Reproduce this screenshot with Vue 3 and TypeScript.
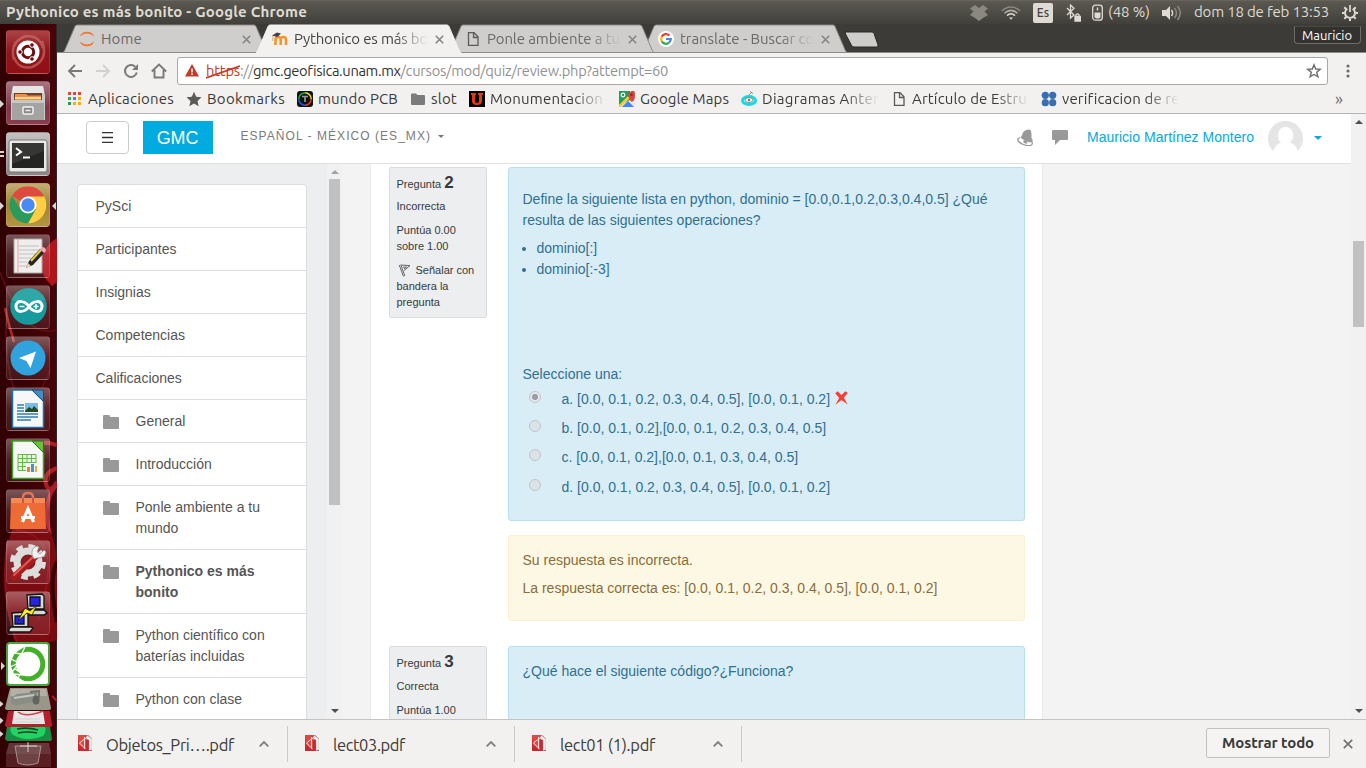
<script setup lang="ts">
import type { Directive } from 'vue'

interface Label { text: string; width: number }
interface Tab extends Label { icon: string; active?: boolean; fade?: boolean }
interface Bookmark extends Label { icon: string; fade?: boolean }
interface Entry { lines: string[]; folder?: boolean; current?: boolean }

// Adjusts tracking so that a label takes the given advance width in pixels.
const vFit: Directive<HTMLElement, number> = {
  mounted(el, binding) {
    const range = document.createRange()
    range.selectNodeContents(el)
    const natural = range.getBoundingClientRect().width
    const count = (el.textContent ?? '').length
    if (natural > 0 && count > 0) {
      el.style.letterSpacing = `${(binding.value - natural) / count}px`
    }
  },
}

const tabs: Tab[] = [
  { icon: 'jupyter', text: 'Home', width: 41 },
  { icon: 'moodle', text: 'Pythonico es más bo', width: 134, active: true, fade: true },
  { icon: 'page', text: 'Ponle ambiente a tu', width: 133, fade: true },
  { icon: 'google', text: 'translate - Buscar co', width: 134, fade: true },
]

const bookmarks: Bookmark[] = [
  { icon: 'apps', text: 'Aplicaciones', width: 86 },
  { icon: 'star', text: 'Bookmarks', width: 78 },
  { icon: 'pcb', text: 'mundo PCB', width: 80 },
  { icon: 'folder', text: 'slot', width: 26 },
  { icon: 'unam', text: 'Monumentacion', width: 113, fade: true },
  { icon: 'maps', text: 'Google Maps', width: 89 },
  { icon: 'antenna', text: 'Diagramas Anter', width: 117, fade: true },
  { icon: 'page', text: 'Artículo de Estru', width: 115, fade: true },
  { icon: 'dots', text: 'verificacion de re', width: 117, fade: true },
]

const entries: Entry[] = [
  { lines: ['PySci'] },
  { lines: ['Participantes'] },
  { lines: ['Insignias'] },
  { lines: ['Competencias'] },
  { lines: ['Calificaciones'] },
  { lines: ['General'], folder: true },
  { lines: ['Introducción'], folder: true },
  { lines: ['Ponle ambiente a tu', 'mundo'], folder: true },
  { lines: ['Pythonico es más', 'bonito'], folder: true, current: true },
  { lines: ['Python científico con', 'baterías incluidas'], folder: true },
  { lines: ['Python con clase'], folder: true },
]

const answers = [
  'a. [0.0, 0.1, 0.2, 0.3, 0.4, 0.5], [0.0, 0.1, 0.2]',
  'b. [0.0, 0.1, 0.2],[0.0, 0.1, 0.2, 0.3, 0.4, 0.5]',
  'c. [0.0, 0.1, 0.2],[0.0, 0.1, 0.3, 0.4, 0.5]',
  'd. [0.0, 0.1, 0.2, 0.3, 0.4, 0.5], [0.0, 0.1, 0.2]',
]

const downloads: Label[] = [
  { text: 'Objetos_Pri….pdf', width: 128 },
  { text: 'lect03.pdf', width: 72 },
  { text: 'lect01 (1).pdf', width: 95 },
]
</script>

<template>
  <div class="desktop">
    <header class="panel">
      <span class="panel-title" v-fit="301">Pythonico es más bonito - Google Chrome</span>
      <div class="indicators">
        <svg class="ind-dropbox" width="18" height="16" viewBox="0 0 18 16" fill="#8b887f"><path d="M5 0l4 3 4-3 5 3.500-3.500 3L18 10l-5 3-4 3-4-3-5-3 3.500-3.500L0 3.500z" /></svg>
        <svg class="ind-wifi" width="20" height="14" viewBox="0 0 20 14" fill="none" stroke-width="1.500"><path d="M.8 5Q10-3 19.200 5" stroke="#8b887f" /><path d="M3.500 7.300Q10 1.500 16.500 7.300" stroke="#b5b1a8" /><path d="M6 9.600Q10 6 14 9.600" stroke="#dfdbd2" /><path d="M8 11.500h4l-2 2.300z" fill="#dfdbd2" /></svg>
        <span class="ind-lang">Es</span>
        <svg class="ind-bt" width="15" height="18" viewBox="0 0 15 18" fill="none" stroke="#dfdbd2" stroke-width="1.300"><path d="M1 4l7 7-3.500 3V1L8 4.300 1 11" /><path d="M10 12.500v-1.800q1.500-1.600 3 0v1.800" /><path d="M9 12.500h5.500V17H9z" fill="#dfdbd2" /></svg>
        <svg class="ind-bat" width="11" height="17" viewBox="0 0 11 17"><rect x=".7" y="1.200" width="9.600" height="15" rx="2.800" fill="none" stroke="#dfdbd2" stroke-width="1.300" /><path d="M2.500 8.500h6v4q0 2-3 2t-3-2zM4.800 3.500h1.400v3H4.800z" fill="#dfdbd2" /></svg>
        <span class="ind-text ind-pct" v-fit="42">(48 %)</span>
        <svg class="ind-sound" width="20" height="16" viewBox="0 0 20 16"><path d="M0 5h4l4-4v14l-4-4H0z" fill="#dfdbd2" /><path d="M9.500 5q2.200 3 0 6" fill="none" stroke="#dfdbd2" stroke-width="1.500" /><path d="M12.500 3q4 5 0 10M15.500 1q5.500 7 0 14" fill="none" stroke="#8b887f" stroke-width="1.500" /></svg>
        <span class="ind-text ind-date" v-fit="135">dom 18 de feb 13:53</span>
        <svg class="ind-gear" width="16" height="16" viewBox="0 0 16 16" fill="none" stroke="#dfdbd2"><path d="M5.300 3.700A5 5 0 1 0 10.700 3.700" stroke-width="1.900" /><path d="M8 0v7" stroke-width="1.700" /><path d="M0 8h2.500M13.500 8H16M8 13.500V16M2.300 2.300l2 2M13.700 2.300l-2 2M2.300 13.700l2-2M13.700 13.700l-2-2" stroke-width="2" /></svg>
      </div>
    </header>

    <div class="workspace">
      <nav class="launcher">
        <svg class="swirls" width="57" height="744" viewBox="0 24 57 744" fill="none" aria-hidden="true">
          <path d="M57 238Q44 246 40 262Q41 276 52 286L57 282z" fill="#b2141c" />
          <path d="M0 272Q24 340 57 330M8 300Q2 350 14 390T50 370" stroke="#560c11" stroke-width="2" />
          <path d="M5 308q4 18 9 34" stroke="#b3232b" stroke-width="2.500" />
          <path d="M57 445Q42 440 34 446M57 468q-14 5-11 16t11-2M57 485Q42 498 50 535" stroke="#a91d27" stroke-width="4" />
          <path d="M14 524Q60 505 57 580V640Q34 648 14 640Q-4 570 14 524z" fill="#7b0a11" />
          <path d="M16 530Q66 535 38 620M8 540Q-2 600 22 655" stroke="#8c1219" stroke-width="2" />
          <path d="M57 562Q48 580 57 622" stroke="#320003" stroke-width="4" />
          <path d="M52 696l5 5" stroke="#a91d27" stroke-width="2" />
        </svg>
        <div class="tile tile-dash">
          <svg viewBox="0 0 44 44"><path d="M8 30Q3 12 20 6Q34 6 37 18M36 11Q43 30 26 37Q12 40 8 27" fill="none" stroke="#d47b7d" stroke-width="2.500" opacity=".55" /><circle cx="22" cy="22" r="11.500" fill="#fff" /><circle cx="22" cy="22" r="5.700" fill="none" stroke="#6d0d10" stroke-width="3" /><g fill="#6d0d10" stroke="#fff" stroke-width="1"><circle cx="14" cy="22" r="2.300" /><circle cx="26" cy="15" r="2.300" /><circle cx="26" cy="29" r="2.300" /></g></svg>
        </div>
        <div class="tile tile-files">
          <i class="pip-left" />
          <svg viewBox="0 0 44 44"><path d="M7 5h30l2 9v25H5V14z" fill="#c9c9c7" /><path d="M7 5h30l1 7H6z" fill="#e6e6e4" /><path d="M8 12h28v8H8z" fill="#6a4330" /><path d="M9 13h11l2 1.500h13V20H9z" fill="#f58c3c" /><path d="M9 16h26v2H9z" fill="#ffd9a0" /><path d="M6 19h32v20H6z" fill="#a3a3a1" /><path d="M6 19h32v3H6z" fill="#c7c7c5" /><rect x="17" y="26" width="10" height="7" rx="1" fill="#888" stroke="#f2f2f2" stroke-width="1.500" /><path d="M19.500 29.500h5" stroke="#eee" stroke-width="1.500" /></svg>
        </div>
        <div class="tile tile-term">
          <i class="pip-left two" />
          <svg viewBox="0 0 44 44"><rect x="3" y="8" width="38" height="32" rx="2" fill="#e8e8e6" stroke="#777" /><rect x="6" y="11" width="32" height="25" fill="#242523" /><path d="M6 11h32v8L6 32z" fill="#424340" opacity=".6" /><path d="M10 16l5 4-5 3.500" fill="none" stroke="#fff" stroke-width="2" /><path d="M17 25.500h7" stroke="#fff" stroke-width="2" /></svg>
        </div>
        <div class="tile tile-chrome">
          <i class="pip-left" /><i class="pip-right" />
          <svg viewBox="0 0 44 44"><path d="M22 22L6 13A18.300 18.300 0 0 1 38 13z" fill="#dc4b3e" /><path d="M22 22V13.500h16.200A18.300 18.300 0 0 1 22 40.300l8-14z" fill="#ffce44" /><path d="M22 22l7.500 4.500L22 40.300A18.300 18.300 0 0 1 6 13l8.500 13.500z" fill="#2a9b5c" /><circle cx="22" cy="22" r="8.500" fill="#fff" /><circle cx="22" cy="22" r="6.700" fill="#4a8af4" /></svg>
        </div>
        <div class="tile">
          <svg viewBox="0 0 44 44"><path d="M8 5h28v34H8z" fill="#efeeec" stroke="#aaa" /><path d="M13 12h20M13 16h20M13 20h17M13 24h12M13 28h8M13 32h8" stroke="#c0c1c5" /><path d="M12 5v34" stroke="#e8a0a0" /><path d="M20 34l3-7 11-12 4 4-11 12z" fill="#272727" /><path d="M25 27L35 16" stroke="#efcf31" stroke-width="2" /><path d="M34 15l2-2q4 0 4 4l-2 2z" fill="#f1a7c0" /><path d="M20 34l2-5 3 3z" fill="#f0d7a0" /></svg>
        </div>
        <div class="tile">
          <svg viewBox="0 0 44 44"><circle cx="22.500" cy="21.500" r="18.300" fill="#169a9c" /><path d="M5.500 14.500A18.300 18.300 0 0 1 39.500 14.500Q22 23 5.500 14.500" fill="#49b9b8" opacity=".45" /><path d="M23 21.500C19 15.500 10 14.500 10 21.500S19 27.500 23 21.500S36 14.500 36 21.500S27 27.500 23 21.500z" fill="none" stroke="#fff" stroke-width="3" /><path d="M13.500 21.500h5M27.500 21.500h5M30 19v5" stroke="#fff" stroke-width="1.500" /></svg>
        </div>
        <div class="tile">
          <svg viewBox="0 0 44 44"><circle cx="22" cy="22" r="17.500" fill="#30a3df" /><path d="M13 22l17-6.500-5.500 16.500-4-7z" fill="#fff" /></svg>
        </div>
        <div class="tile">
          <svg viewBox="0 0 44 44"><path d="M6.500 3h20L37.500 14v26.500h-31z" fill="#f7f7f7" stroke="#1673a8" stroke-width="1.500" /><path d="M26 3h11.500v11.500z" fill="#3f8fc5" stroke="#144f78" /><path d="M11 18h7M11 21h7M11 24h7M11 27h21M11 30h21M11 33h14" stroke="#2e83b8" stroke-width="1.500" /><path d="M19 16h13v9H19z" fill="#76bce8" /><path d="M19 24l4-4 3 2 2-3 4 4v2H19z" fill="#254a20" /></svg>
        </div>
        <div class="tile">
          <svg viewBox="0 0 44 44"><path d="M6.500 3h20L37.500 14v26.500h-31z" fill="#f7f7f7" stroke="#37a51f" stroke-width="1.500" /><path d="M26 3h11.500v11.500z" fill="#67c337" stroke="#2a721a" /><path d="M12 16.500h18v16H12zM12 20.500h18M12 24.500h18M12 28.500h18M16.500 16v16M21 16v16M25.500 16v16" fill="#e8f7df" stroke="#5ebc3f" /><path d="M20 25h12v9H20z" fill="#f5f5f5" /><path d="M21 29h3v5h-3z" fill="#e7823c" /><path d="M25 26h3v8h-3z" fill="#4e8fc8" /><path d="M29 28h2v6h-2z" fill="#e2b243" /></svg>
        </div>
        <div class="tile">
          <svg viewBox="0 0 44 44"><path d="M17 14V8q0-4 5-4t5 4v6" fill="none" stroke="#e0745a" stroke-width="2.500" /><path d="M5 9h34l1 31H4z" fill="#ef6b36" /><path d="M5 9h34v5H5z" fill="#f58a58" /><path d="M17 14V9M27 14V9" stroke="#c9583a" stroke-width="2" /><path d="M16.500 33l5.500-13 5.500 13M15 28.500h14" fill="none" stroke="#fff" stroke-width="3.200" /></svg>
        </div>
        <div class="tile">
          <svg viewBox="0 0 44 44"><circle cx="22" cy="22" r="15.500" fill="none" stroke="#dededc" stroke-width="5" stroke-dasharray="6.500 5.670" /><circle cx="22" cy="22" r="11" fill="#861c22" stroke="#dddddb" stroke-width="7" /><path d="M8 37L29 17" stroke="#a91b1d" stroke-width="6.500" stroke-linecap="round" /><path d="M8 35L28 16" stroke="#e35751" stroke-width="2" stroke-linecap="round" /><path d="M26 15q-1-7 5-9l2 1-2 5 3 2 4-4 2 2q-1 6-9 6l-3 1z" fill="#f1f1ef" stroke="#8a8a88" stroke-width=".7" /></svg>
        </div>
        <div class="tile">
          <svg viewBox="0 0 44 44"><g stroke="#111" stroke-width="1.300"><path d="M21 4l15-1 2 2v13H22z" fill="#d9d9d4" /><path d="M24 6h10v9H24z" fill="#2424e8" /><path d="M18 19h20l3 3-3 2H19z" fill="#d9d9d4" /><path d="M6 22l14-1 2 2v13H7z" fill="#d9d9d4" /><path d="M9 25h9v8H9z" fill="#2424e8" /><path d="M5 36h20l2 1-3 4H3v-3z" fill="#d9d9d4" /><path d="M12 30l7-13 5 3 7-6-5 10-5-2z" fill="#ffee22" stroke-width=".8" /></g></svg>
        </div>
        <div class="tile tile-anaconda">
          <i class="pip-left" />
          <svg viewBox="0 0 44 44"><circle cx="22" cy="22" r="14.800" fill="none" stroke="#43b02a" stroke-width="5" /><path d="M20 3L8 11 3 22l5 11 10 7M19 5l-5 10M8 11l8 1M5 17l8 4-6 8M13 21l-9 4M9 27l6 4-3 5M7 32l11 1" fill="none" stroke="#fff" stroke-width="1.300" /></svg>
        </div>
        <div class="stack">
          <svg width="57" height="82" viewBox="0 0 57 82">
            <path d="M10 2h37l4 20q0 2-2 2H7q-2 0-2-2z" fill="#99968a" /><path d="M11 3h35l1 7H10z" fill="#b3b0a6" />
            <path d="M11 12l6-4 20-2v9l-20 4q-6 0-6-3z" fill="#8a8c86" /><ellipse cx="36" cy="14" rx="3.500" ry="4.500" fill="#62645e" /><path d="M14 11l20-3v2l-20 3z" fill="#c4c5c0" /><path d="M30 6l9-1v7" fill="none" stroke="#6f716b" stroke-width="1.800" />
            <path d="M8 25h42l2 14q0 2-2 2H6l-1-2z" fill="#b2202d" /><path d="M14 25h29l2 13H12z" fill="#e8e6e6" /><path d="M18 26q8 6 25-1" fill="none" stroke="#d5424a" stroke-width="1.500" /><path d="M15 33h25M15 36h25" stroke="#d5d1d1" />
            <path d="M7 41h43l2 12q0 2-2 2H7l-2-2z" fill="#188d45" /><path d="M11 41h34q2 4-2 9-15 7-30-1-4-4-2-8z" fill="#20d363" /><path d="M17 43q11-2 21 1M18 47q10-2 19 0" fill="none" stroke="#144624" stroke-width="1.700" />
            <path d="M9 57h40l2 11H6z" fill="#8c6a6a" opacity=".5" /><path d="M6 68h45v13H6z" fill="#6b3436" opacity=".6" /><path d="M15 60h26l-3 17q-11 4-20 0z" fill="#8a6f6f" fill-opacity=".45" stroke="#b7a6a5" stroke-width=".8" /><path d="M28 56v10M20 60h17" stroke="#eee" stroke-width=".8" />
            <g fill="#d9d5d2"><path d="M0 15l3.500 3L0 21zM0 31.500l3.500 3L0 38zM0 45l3.500 3L0 51z" /></g>
          </svg>
        </div>
      </nav>

      <section class="browser">
        <div class="tabstrip">
          <div class="tabs">
            <div v-for="tab in tabs" :key="tab.text" class="tab" :class="{ active: tab.active }">
              <svg class="tab-shape" width="207" height="29" viewBox="0 0 207 29"><path class="tab-fill" d="M0 28.500L1.500 27 12 2.500Q12.700 1 14 1H191Q192.300 1 193 2.500L203.500 27 205 28.500z" /></svg>
              <span class="favicon">
                <svg v-if="tab.icon === 'jupyter'" width="16" height="16" viewBox="0 0 16 16" fill="#f37726"><path d="M.8 5.500Q2.500.7 8 .7t7.200 4.800Q8-.3.8 5.500zM.8 10.500Q2.500 15.300 8 15.300t7.200-4.800Q8 16.300.8 10.500z" /></svg>
                <svg v-else-if="tab.icon === 'moodle'" width="16" height="16" viewBox="0 0 16 16"><path d="M3.500 14V8.500Q3.500 6 6 6t2.700 2.500V14M8.700 14V8.500Q8.700 6 11.300 6T14 8.500V14" fill="none" stroke="#f7931e" stroke-width="2.500" /><path d="M0 4.500l5-3 4 1-3.500 3.500z" fill="#444" /><path d="M.8 5v5" stroke="#e6ab77" /></svg>
                <svg v-else-if="tab.icon === 'page'" width="16" height="16" viewBox="0 0 16 16" fill="none" stroke="#5a5a5a" stroke-width="1.300"><path d="M3.500 1.700h5.500l4 4v8.600H3.500zM8.500 2v4.500H13" /></svg>
                <svg v-else width="16" height="16" viewBox="0 0 16 16"><circle cx="8" cy="8" r="8" fill="#fff" /><g fill="none" stroke-width="2.200"><path d="M11.500 4.500A4.800 4.800 0 0 0 3.700 5.800" stroke="#ea4335" /><path d="M3.700 5.800A4.800 4.800 0 0 0 3.700 10.200" stroke="#fbbc05" /><path d="M3.700 10.200A4.800 4.800 0 0 0 11 11.700" stroke="#34a853" /><path d="M11 11.700Q12.800 10.200 12.800 8H8" stroke="#4285f4" /></g></svg>
              </span>
              <span class="tab-label" :class="{ fade: tab.fade }"><span v-fit="tab.width">{{ tab.text }}</span></span>
              <svg class="tab-close" width="9" height="9" viewBox="0 0 9 9" stroke="#868584" stroke-width="1.600"><path d="M.8.8l7.400 7.400M8.200.8L.8 8.200" /></svg>
            </div>
          </div>
          <svg class="new-tab" width="34" height="17" viewBox="0 0 34 17"><path d="M1 1h26q1.500 0 2 1.500l4 11.500q.5 2-1.500 2H9q-2 0-2.700-2L.5 3Q0 1 1 1z" fill="#cfcdcb" stroke="#2b2a27" /></svg>
          <span class="profile"><span v-fit="50">Mauricio</span></span>
        </div>

        <div class="toolbar">
          <svg width="16" height="16" viewBox="0 0 16 16" fill="none" stroke="#7a7978" stroke-width="1.900"><path d="M15 8H2.500M8 2L2 8l6 6" /></svg>
          <svg width="16" height="16" viewBox="0 0 16 16" fill="none" stroke="#d3d1cf" stroke-width="1.900"><path d="M1 8h12.500M8 2l6 6-6 6" /></svg>
          <svg width="16" height="16" viewBox="0 0 16 16" fill="none" stroke="#7a7978" stroke-width="2"><path d="M13.800 9.500A6 6 0 1 1 12.200 3.700" /><path d="M15 1v6H9z" fill="#7a7978" stroke="none" /></svg>
          <svg width="16" height="16" viewBox="0 0 16 16" fill="none" stroke="#7a7978" stroke-width="1.900"><path d="M.8 8.500L8 1.500l7.200 7M3.500 7v7.500h9V7" /></svg>
          <div class="omnibox">
            <svg width="14" height="13" viewBox="0 0 14 13"><path d="M7 0l7 12.500H0z" fill="#c53929" /><path d="M7 4.500v4M7 9.500v1.500" stroke="#fff" stroke-width="1.500" /></svg>
            <div class="url">
              <span class="scheme"><span v-fit="34">https</span><svg class="strike" width="35" height="14" viewBox="0 0 35 14"><path d="M0 13L34 1" stroke="#c53929" stroke-width="1.700" /></svg></span>
              <span v-fit="13">://</span>
              <span class="domain" v-fit="147">gmc.geofisica.unam.mx</span>
              <span v-fit="267.500">/cursos/mod/quiz/review.php?attempt=60</span>
            </div>
            <svg class="fav" width="16" height="16" viewBox="0 0 16 16" fill="none" stroke="#6d6c6b" stroke-width="1.400"><path d="M8 1.800l1.700 4.200 4.500.3-3.500 3 1.200 4.500L8 11.500l-3.900 2.300 1.200-4.500-3.500-3 4.500-.3z" /></svg>
          </div>
          <svg class="menu" width="4" height="14" viewBox="0 0 4 14" fill="#6d6c6b"><circle cx="2" cy="2" r="1.600" /><circle cx="2" cy="7" r="1.600" /><circle cx="2" cy="12" r="1.600" /></svg>
        </div>

        <div class="bookmarks">
          <div v-for="mark in bookmarks" :key="mark.text" class="bookmark">
            <svg v-if="mark.icon === 'apps'" width="16" height="16" viewBox="0 0 16 16"><path d="M1 1h3v3H1zM6 1h3v3H6zM11 1h3v3h-3z" fill="#ea4335" /><path d="M1 6h3v3H1z" fill="#34a853" /><path d="M6 6h3v3H6z" fill="#4285f4" /><path d="M11 6h3v3h-3zM6 11h3v3H6zM11 11h3v3h-3z" fill="#fbad05" /><path d="M1 11h3v3H1z" fill="#279b55" /></svg>
            <svg v-else-if="mark.icon === 'star'" width="16" height="16" viewBox="0 0 16 16" fill="#5a5a5a"><path d="M8 .8l2.200 4.900 5.300.6-4 3.600 1.100 5.300L8 12.500l-4.600 2.700 1.100-5.300-4-3.600 5.300-.6z" /></svg>
            <svg v-else-if="mark.icon === 'pcb'" width="16" height="16" viewBox="0 0 16 16"><rect width="16" height="16" rx="3" fill="#111" /><g fill="none" stroke-width="1.500"><path d="M1.800 8A6.200 6.200 0 0 1 8 1.800" stroke="#19aa38" /><path d="M8 1.800A6.200 6.200 0 0 1 14.200 8" stroke="#eed42f" /><path d="M14.200 8A6.200 6.200 0 0 1 8 14.200" stroke="#e43731" /><path d="M8 14.200A6.200 6.200 0 0 1 1.800 8" stroke="#2557dc" /></g><path d="M5 5.500h6M8 5.500V11" stroke="#999" stroke-width="1.700" /></svg>
            <svg v-else-if="mark.icon === 'folder'" width="16" height="16" viewBox="0 0 16 16" fill="#7b7b7b"><path d="M1 3.500q0-1 1-1h4l1.500 1.500H14q1 0 1 1V13q0 1-1 1H2q-1 0-1-1z" /></svg>
            <svg v-else-if="mark.icon === 'unam'" width="16" height="16" viewBox="0 0 16 16"><path d="M0 0h16v16H0z" fill="#000" /><path d="M2 2h5v2H6v6q0 2 2 2t2-2V4H9V2h5v2h-1v6q0 4-5 4t-5-4V4H2z" fill="#e33a0c" /></svg>
            <svg v-else-if="mark.icon === 'maps'" width="16" height="16" viewBox="0 0 16 16"><path d="M0 0h16v16H0z" fill="#e8e8e8" /><path d="M0 0h11v9L5 12 0 14z" fill="#229f59" /><path d="M3 16l6-6 6 6z" fill="#4285f4" /><path d="M0 14l9-9 2 2-9 9H0z" fill="#f5ca45" /><path d="M12.500 11Q9 6 9 4t3.500-4T16 4t-3.500 7z" fill="#d9473a" /><circle cx="12.500" cy="3.700" r="1.300" fill="#812d2a" /><circle cx="4" cy="4" r="1.800" fill="none" stroke="#fff" stroke-width="1.200" /></svg>
            <svg v-else-if="mark.icon === 'antenna'" width="16" height="16" viewBox="0 0 16 16"><ellipse cx="8" cy="9.500" rx="6.500" ry="4" fill="none" stroke="#12dbe3" stroke-width="3" /><ellipse cx="8" cy="9" rx="4" ry="2.500" fill="#f6f6f6" stroke="#666" stroke-width=".7" /><circle cx="8" cy="9" r="1.200" fill="#777" /><path d="M8 4l3-3M9 .5l3 2" stroke="#777" stroke-width=".8" /></svg>
            <svg v-else-if="mark.icon === 'page'" width="16" height="16" viewBox="0 0 16 16" fill="none" stroke="#5a5a5a" stroke-width="1.300"><path d="M3.500 1.700h5.500l4 4v8.600H3.500zM8.500 2v4.500H13" /></svg>
            <svg v-else width="16" height="16" viewBox="0 0 16 16" fill="#396eb2"><circle cx="4.300" cy="4.300" r="3.600" /><circle cx="11.700" cy="4.300" r="3.600" /><circle cx="4.300" cy="11.700" r="3.600" /><circle cx="11.700" cy="11.700" r="3.600" /></svg>
            <span class="mark-label" :class="{ fade: mark.fade }"><span v-fit="mark.width">{{ mark.text }}</span></span>
          </div>
          <span class="overflow">»</span>
        </div>

        <div class="page">
          <div class="page-main">
            <div class="navbar">
              <button class="burger" type="button" aria-label="Menú"><svg width="11" height="11" viewBox="0 0 11 11" stroke="#333" stroke-width="1.300"><path d="M0 .7h11M0 5.500h11M0 10.300h11" /></svg></button>
              <span class="brand">GMC</span>
              <span class="language" v-fit="190.500">ESPAÑOL - MÉXICO (ES_MX)</span>
              <i class="caret lang-caret" />
              <div class="user">
                <svg class="bell" width="16" height="17" viewBox="0 0 16 17" fill="#999"><path d="M6 3.500Q8 .5 12.500.5L14 2q.8 3 .5 7 1.500 1.500 1.200 4.500-4.500.2-8-2T3.500 8.500Q5 7 6 3.500z" /><path d="M3 8.700Q.5 9.500.8 11q.7 2.500 5.500 4.500t8.200.5q1-.8.900-2.500" fill="none" stroke="#999" stroke-width="1.300" /><ellipse cx="8.300" cy="13" rx="2.200" ry="1.500" transform="rotate(24 8.300 13)" /></svg>
                <svg class="comment" width="16" height="15" viewBox="0 0 16 15" fill="#999"><path d="M1.200 0h13.600Q16 0 16 1.200v7.600q0 1.200-1.200 1.200H8l-5 5V10H1.200Q0 10 0 8.800V1.200Q0 0 1.200 0z" /></svg>
                <span class="user-name" v-fit="167">Mauricio Martínez Montero</span>
                <svg class="avatar" width="35" height="35" viewBox="0 0 35 35"><circle cx="17.500" cy="17.500" r="17.500" fill="#e5e5e5" /><ellipse cx="17.500" cy="14.500" rx="7.700" ry="8.800" fill="#fff" /><path d="M5 31Q7 23 13 21.500h9Q28 23 30 31l-3 4H8z" fill="#fff" /></svg>
                <i class="caret user-caret" />
              </div>
            </div>
            <div class="columns">
              <aside class="drawer">
                <ul class="entries">
                  <li v-for="entry in entries" :key="entry.lines[0]" :class="{ nested: entry.folder, current: entry.current }">
                    <svg v-if="entry.folder" width="16" height="14" viewBox="0 0 16 14" fill="#999"><path d="M0 1Q0 0 1 0h5Q7 0 7 1v1h8q1 0 1 1v10q0 1-1 1H1q-1 0-1-1z" /></svg>
                    <span><template v-for="(line, n) in entry.lines" :key="line"><br v-if="n" />{{ line }}</template></span>
                  </li>
                </ul>
              </aside>
              <div class="drawer-scroll"><i class="arrow-up muted" /><i class="drawer-thumb" /><i class="arrow-down" /></div>
              <main class="content">
                <article class="question first">
                  <div class="info">
                    <h3>Pregunta <b>2</b></h3>
                    <p>Incorrecta</p>
                    <p>Puntúa 0.00<br />sobre 1.00</p>
                    <p><svg class="flag" width="13" height="13" viewBox="0 0 13 13" fill="none" stroke="#666" stroke-width="1"><path d="M1.200 1l4.300 11.500M2.800.8l4 11.200M2.800 1l9.200.6-6.300 5.200M4.800 3.200l3.700-.2-2.500 2" /></svg>Señalar con<br />bandera la<br />pregunta</p>
                  </div>
                  <div class="body">
                    <div class="formulation">
                      <p>Define la siguiente lista en python, dominio = [0.0,0.1,0.2,0.3,0.4,0.5] ¿Qué<br />resulta de las siguientes operaciones?</p>
                      <ul class="ops"><li>dominio[:]</li><li>dominio[:-3]</li></ul>
                      <p class="prompt">Seleccione una:</p>
                      <div v-for="(answer, n) in answers" :key="answer" class="answer">
                        <i class="radio" :class="{ checked: n === 0 }" />
                        <span>{{ answer }}</span>
                        <svg v-if="n === 0" class="cross" width="13" height="14" viewBox="0 0 13 14"><path d="M.2 2.200L2.700.2 6.500 4.200 10.200.2l2.600 1.900-4 4.700L12.700 13.500 6.500 9 .3 13.700 4.200 7z" fill="#ff3c32" /></svg>
                      </div>
                    </div>
                    <div class="feedback"><p>Su respuesta es incorrecta.</p><p>La respuesta correcta es: [0.0, 0.1, 0.2, 0.3, 0.4, 0.5], [0.0, 0.1, 0.2]</p></div>
                  </div>
                </article>
                <article class="question">
                  <div class="info"><h3>Pregunta <b>3</b></h3><p>Correcta</p><p>Puntúa 1.00</p></div>
                  <div class="body"><div class="formulation next"><p>¿Qué hace el siguiente código?¿Funciona?</p></div></div>
                </article>
              </main>
            </div>
          </div>
          <div class="page-scroll"><i class="arrow-up" /><i class="page-thumb" /><i class="arrow-down" /></div>
        </div>

        <footer class="downloads">
          <div v-for="file in downloads" :key="file.text" class="download">
            <svg width="14" height="16" viewBox="0 0 14 16"><path d="M0 0h10l4 4v12H0z" fill="#c62930" /><path d="M9 0l5 4v11l-3 .5V5L8 4z" fill="#ececec" stroke="#999" stroke-width=".4" /><path d="M0 0h8v15L1 10z" fill="#d94c46" /><path d="M8.500 2.500L1.500 8l5.500 5.500M6.500 2v12" fill="none" stroke="#f5dcdc" stroke-width="1" /></svg>
            <span class="file-name"><span v-fit="file.width">{{ file.text }}</span></span>
            <svg class="chevron" width="10" height="6" viewBox="0 0 10 6" fill="none" stroke="#807f7e" stroke-width="1.800"><path d="M.7 5.300L5 1l4.300 4.300" /></svg>
          </div>
          <button class="show-all" type="button"><span v-fit="92">Mostrar todo</span></button>
          <svg class="bar-close" width="10" height="10" viewBox="0 0 10 10" stroke="#737271" stroke-width="1.700"><path d="M.8.8l8.400 8.400M9.200.8L.8 9.200" /></svg>
        </footer>
      </section>
    </div>
  </div>
</template>

<style>
body { margin: 0; overflow: hidden; }
</style>

<style scoped>
* { box-sizing: border-box; }
svg { display: block; flex: none; }
p, h3, ul { margin: 0; padding: 0; }
.desktop { width: 1366px; height: 768px; overflow: hidden; display: flex; flex-direction: column; font-family: Ubuntu, "Noto Sans", sans-serif; font-size: 15px; color: #3c3b37; white-space: nowrap; }
.panel { height: 24px; flex: none; display: flex; align-items: center; padding: 0 8px 0 6px; background: linear-gradient(#5b5950, #504f48 40%, #403f3a); border-top: 1px solid #66645c; color: #dfdbd2; }
.panel-title { font-weight: 700; font-size: 15px; line-height: 20px; margin-top: -2px; }
.indicators { margin-left: auto; display: flex; align-items: center; }
.ind-wifi { margin-left: 13px; }
.ind-lang { width: 20px; height: 20px; margin-left: 12px; border-radius: 2px; background: #dfdbd2; color: #45443f; font-size: 12px; line-height: 20px; text-align: center; font-weight: 500; }
.ind-bt { margin-left: 13px; }
.ind-bat { margin-left: 11px; }
.ind-text { font-size: 15px; line-height: 20px; margin-top: -2px; }
.ind-pct { margin-left: 5px; width: 42px; }
.ind-sound { margin-left: 12px; }
.ind-date { margin-left: 12px; width: 135px; }
.ind-gear { margin-left: 13px; }
.workspace { display: flex; height: 744px; }

.launcher { position: relative; width: 57px; padding: 6px 0 0 6px; display: flex; flex-direction: column; gap: 7px; background: linear-gradient(90deg, #300003, #480307); border-right: 1px solid #29292b; }
.swirls { position: absolute; left: 0; top: 0; }
.tile { position: relative; width: 44px; height: 44px; flex: none; border-radius: 4px; border: 1px solid rgba(255, 255, 255, .12); background: linear-gradient(rgba(255, 255, 255, .34), rgba(255, 255, 255, .12) 50%, rgba(255, 255, 255, .08)); }
.tile svg { width: 44px; height: 44px; margin: -1px; }
.tile-dash { background: linear-gradient(#ac4245, #8e1519 50%, #8f1015); }
.tile-files { background: linear-gradient(#a57581, #7e3647 60%, #8c3c4f); }
.tile-term { background: linear-gradient(#c5c0c1, #8d8586); }
.tile-chrome { background: linear-gradient(#c2ad73, #a28431 50%, #b29642); }
.tile-anaconda { background: #fff; border: 2px solid #43a83a; }
.tile-anaconda svg { margin: -2px; }
.pip-left, .pip-right { position: absolute; top: 18px; border: 4px solid transparent; }
.pip-left { left: -7px; border-left-color: #d9d5d2; border-right-width: 0; }
.pip-left.two { border: 0; width: 4px; height: 6px; border-top: 2px solid #d9d5d2; border-bottom: 2px solid #d9d5d2; }
.pip-right { right: -7px; border-right-color: #d9d5d2; border-left-width: 0; }
.stack { position: relative; margin: -7px 0 0 -6px; }

.browser { width: 1309px; display: flex; flex-direction: column; background: #f2f1f0; }
.tabstrip { height: 29px; flex: none; display: flex; background: #3c3b37; padding-left: 6px; border-bottom: 1px solid #8d8b88; }
.tabs { display: flex; isolation: isolate; }
.tab { position: relative; width: 193px; height: 29px; display: flex; align-items: center; padding: 1px 0 0 16px; color: #6a6968; z-index: 1; }
.tab:nth-child(1) { z-index: 4; }
.tab:nth-child(3) { z-index: 3; }
.tab.active { z-index: 5; color: #454442; }
.tab-shape { position: absolute; left: 0; top: 0; z-index: -1; }
.tab-fill { fill: #d0cecd; stroke: #8d8b88; stroke-width: 1; }
.active .tab-fill { fill: #f2f1f0; stroke: #f2f1f0; }
.favicon { width: 16px; }
.tab-label { margin-left: 6px; width: 134px; overflow: hidden; font-size: 15px; line-height: 22px; }
.fade { mask-image: linear-gradient(90deg, #000 calc(100% - 34px), transparent); }
.tab-close { margin-left: 6.500px; }
.new-tab { margin: 7px 0 0 10px; }
.profile { margin: 2px 5px 0 auto; width: 67px; height: 18px; padding-left: 7px; border: 1px solid #6e6c66; border-top-color: #4a4944; border-radius: 0 0 4px 4px; background: #33322f; color: #fff; font-size: 13px; line-height: 17px; }

.toolbar { height: 35px; flex: none; display: flex; align-items: center; padding: 1px 16px 0 10px; gap: 12px; }
.omnibox { width: 1152px; height: 28px; margin: -1px 0 0 -2px; display: flex; align-items: center; padding: 0 5px 0 7px; border: 1px solid #aaa8a6; border-radius: 3px; background: #fff; }
.url { margin-left: 7px; display: flex; color: #929191; font-size: 14.700px; }
.scheme { position: relative; color: #c53929; }
.strike { position: absolute; left: 0; top: 3px; }
.domain { color: #333; }
.fav { margin-left: auto; }
.menu { margin-left: 6px; }

.bookmarks { height: 26px; flex: none; display: flex; align-items: center; gap: 12px; padding: 0 23px 4px 10px; border-bottom: 1px solid #b6b4b4; color: #3b3a38; }
.bookmark { display: flex; align-items: center; }
.mark-label { margin-left: 5px; max-width: 117px; overflow: hidden; font-size: 15px; line-height: 22px; }
.mark-label.fade { width: 117px; }
.overflow { margin-left: auto; font-size: 17px; line-height: 20px; color: #6f6e6d; }

.page { height: 605px; flex: none; display: flex; overflow: hidden; font-family: "Liberation Sans", Arial, sans-serif; font-size: 14px; line-height: 21px; }
.page-main { width: 1294px; display: flex; flex-direction: column; background: #f3f3f3; }
.navbar { height: 50px; flex: none; display: flex; align-items: center; padding: 0 29px 2px 29px; background: #fff; border-bottom: 1px solid #dfe0e2; }
.burger { width: 43px; height: 33px; padding: 0; display: grid; place-items: center; border: 1px solid #ccc; border-radius: 4px; background: #fff; }
.brand { width: 70px; height: 33px; margin-left: 14px; padding-right: 1px; background: #00acdf; color: #fff; font-size: 17.900px; line-height: 34px; text-align: center; }
.language { margin: -3px 0 0 27.500px; width: 190.500px; font-size: 12px; color: #7a7a7a; }
.caret { border: 3.500px solid transparent; border-bottom: 0; }
.lang-caret { margin: -2px 0 0 7px; border-top-color: #777; }
.user { margin-left: auto; display: flex; align-items: center; color: #00acdf; }
.comment { margin: -1px 0 0 19px; }
.user-name { margin-left: 19px; width: 167px; }
.avatar { margin-left: 14px; margin-top: 2px; }
.user-caret { margin-left: 11px; margin-top: 1px; border-width: 4px 4px 0; border-top-color: #00acdf; }
.columns { height: 555px; display: flex; overflow: hidden; }
.drawer { width: 270px; padding: 20px 20px 0; background: #eceef0; color: #55595c; }
.entries { list-style: none; border: 1px solid #ddd; border-radius: 3px; background: #fff; color: #555; }
.entries li { display: flex; align-items: flex-start; padding: 11px 0 10px 17.500px; border-bottom: 1px solid #ddd; }
.entries li.nested { padding-left: 25px; }
.entries li.nested span { margin-left: 16.500px; }
.entries li svg { margin-top: 4px; }
.entries li.current { font-weight: 700; }
.drawer-scroll { width: 15px; display: flex; flex-direction: column; align-items: center; padding: 6px 0; background: #f1f1f1; }
.drawer-thumb { width: 11px; height: 326px; margin-top: 5px; background: #c1c1c1; }
.arrow-up, .arrow-down { border: 4px solid transparent; }
.arrow-up { border-top: 0; border-bottom-color: #505050; }
.arrow-up.muted { border-bottom-color: #a3a3a3; }
.arrow-down { margin-top: auto; border-bottom: 0; border-top-color: #505050; }
.content { width: 673px; margin-left: 28px; padding: 0 17px 0 18px; border: 1px solid #ebebeb; border-width: 0 1px; background: #fff; }
.question { display: flex; align-items: flex-start; gap: 21px; margin-top: 25.400px; }
.question.first { margin-top: 3px; }
.info { width: 98px; flex: none; padding: 5px 0 6.800px 6.500px; border: 1px solid #d9dbdd; border-radius: 2px; background: #eceeef; color: #373a3c; font-size: 11px; line-height: 16px; }
.info h3 { font-size: 11px; font-weight: 400; height: 20px; line-height: 20px; }
.info b { font-size: 17px; }
.info p { margin-top: 8px; }
.info h3 + p { margin-top: 5.200px; }
.flag { display: inline-block; vertical-align: -3px; margin: 0 5px 0 1px; }
.body { width: 517px; flex: none; }
.formulation { height: 354px; padding: 21px 13.500px 0; border: 1px solid #b8dff0; border-radius: 3px; background: #d9edf7; color: #31708f; }
.formulation.next { padding-top: 14px; }
.ops { list-style: disc; margin-top: 7px; padding-left: 14px; }
.prompt { margin: 84px 0 4px; }
.answer { display: flex; height: 29.200px; }
.radio { width: 12px; height: 12px; flex: none; margin: 2.050px 21px 0 6px; border: 1px solid #bfc5c9; border-radius: 50%; background: #dce3e7; }
.radio.checked { background: radial-gradient(#9c9fa0 0 2.700px, #e4e8ea 3.500px); }
.cross { margin: 2px 0 0 5px; }
.feedback { height: 86px; margin-top: 14px; padding: 14px 13.500px; border: 1px solid #faf0cb; border-radius: 3px; background: #fcf8e3; color: #8a6d3b; }
.feedback p + p { margin-top: 7px; }
.page-scroll { width: 15px; display: flex; flex-direction: column; align-items: center; padding: 6px 0; background: #f1f1f1; }
.page-thumb { width: 11px; height: 86px; margin-top: 117px; background: #c1c1c1; }

.downloads { height: 49px; flex: none; display: flex; align-items: center; padding: 0 13px 0 4px; background: #f2f1f0; border-top: 1px solid #c6c4c3; }
.download { width: 227px; height: 36px; display: flex; align-items: center; padding-left: 17px; padding-bottom: 2px; border-right: 1px solid #cccac9; }
.file-name { margin: 3px 0 0 14px; width: 152px; font-size: 16.500px; line-height: 24px; }
.chevron { margin: 1px 0 0 1px; }
.show-all { width: 124px; height: 30px; margin: -2px 0 0 auto; padding: 0; border: 1px solid #c3c1c0; border-radius: 2px; background: #f5f4f3; color: #3b3a38; font: 700 15px/26px Ubuntu, "Noto Sans", sans-serif; }
.bar-close { margin: -1px 0 0 13px; }
</style>
